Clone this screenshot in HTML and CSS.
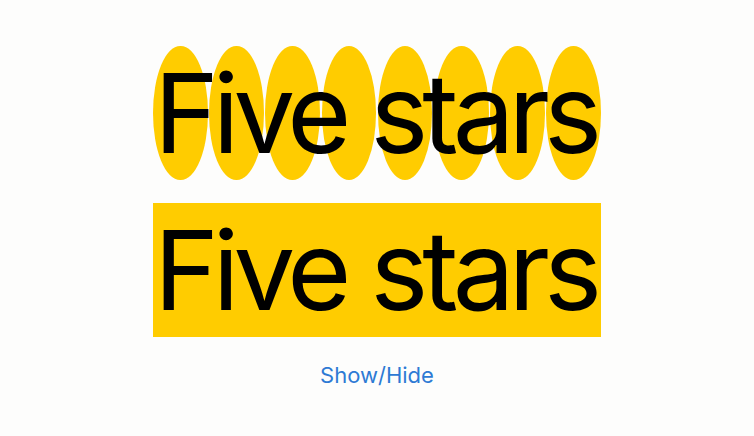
FILE: index.html
```html
<!DOCTYPE html>
<html>
<head>
<meta charset="utf-8">
<link rel="stylesheet" href="styles.css">
</head>
<body>
<main class="stack">
  <div class="badge">
    <div class="ellipses">
      <span class="ellipse"></span><span class="ellipse"></span><span class="ellipse"></span><span class="ellipse"></span>
      <span class="ellipse"></span><span class="ellipse"></span><span class="ellipse"></span><span class="ellipse"></span>
    </div>
    <div class="label">Five stars</div>
  </div>
  <div class="block">
    <div class="label">Five stars</div>
  </div>
  <button class="toggle">Show/Hide</button>
</main>
</body>
</html>
```
FILE: styles.css
```css
html, body {
  margin: 0;
  padding: 0;
  background: #fdfdfc;
}
.stack {
  height: 436px;
  display: flex;
  flex-direction: column;
  align-items: center;
  justify-content: center;
  gap: 23px;
  box-sizing: border-box;
  padding-bottom: 4px;
}
.badge, .block {
  width: 448px;
  height: 134px;
  display: grid;
}
.block {
  background: #ffcc00;
}
.badge > * {
  grid-area: 1 / 1;
}
.ellipses {
  display: flex;
  justify-content: space-between;
}
.ellipse {
  width: 54.5px;
  height: 134px;
  border-radius: 50%;
  background: #ffcc00;
}
.label {
  font-family: Inter, "Liberation Sans", sans-serif;
  font-size: 110px;
  line-height: 134px;
  text-align: center;
  white-space: nowrap;
  color: #000;
  letter-spacing: -6px;
  padding-right: 4px;
  position: relative;
}
.toggle {
  margin-top: 2px;
  margin-bottom: -2px;
  border: 0;
  background: none;
  padding: 0;
  font-family: Inter, "Liberation Sans", sans-serif;
  font-size: 22px;
  line-height: 26px;
  color: #2d7ad4;
}
```
